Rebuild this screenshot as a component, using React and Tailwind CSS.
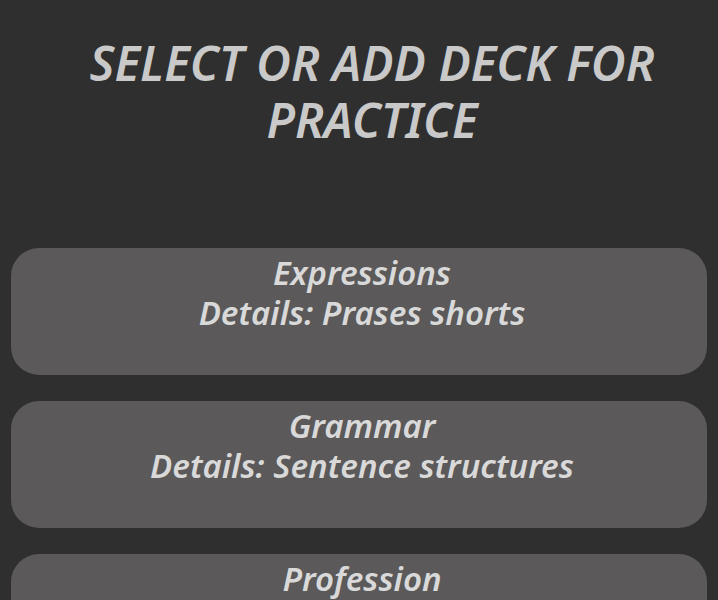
import React from "react";

const decks = [
  { name: "Expressions", details: "Prases shorts" },
  { name: "Grammar", details: "Sentence structures" },
  { name: "Profession", details: "Work vocabulary" },
];

export default function App() {
  return (
    <div className="h-screen overflow-hidden bg-[#2f2f2f] px-[11px] pt-[34px] font-['Noto_Sans',sans-serif] italic font-semibold">
      <h1 className="text-center text-[48px] leading-[57px] text-[#c9c9c9] pl-[55px] pr-[29px]">
        SELECT OR ADD DECK FOR PRACTICE
      </h1>
      <div className="mt-[100px] flex flex-col gap-[26px]">
        {decks.map((d) => (
          <div
            key={d.name}
            className="h-[127px] shrink-0 rounded-[28px] bg-[#5b5959] pt-[5px] pl-[6px] text-center text-[33px] leading-[40px] text-[#d9d9d9]"
          >
            <div>{d.name}</div>
            <div>Details: {d.details}</div>
          </div>
        ))}
      </div>
    </div>
  );
}
